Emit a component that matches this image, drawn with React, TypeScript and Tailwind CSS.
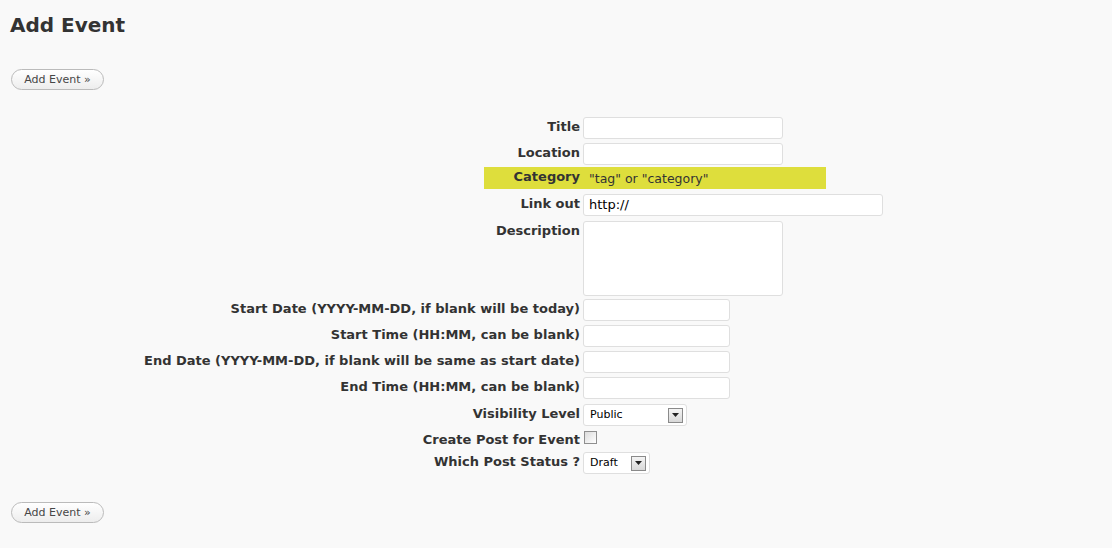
import React from "react";

const font = { fontFamily: '"DejaVu Sans", Verdana, sans-serif' };

function Btn() {
  return (
    <button className="h-[21px] w-[93px] rounded-full border border-[#bbbbbb] bg-gradient-to-b from-white to-[#ededed] text-[11px] text-[#464646] leading-none">
      Add Event »
    </button>
  );
}

function Input({ w, h = 22 }: { w: number; h?: number }) {
  return (
    <div
      className="rounded-[3px] border border-[#dfdfdf] bg-white"
      style={{ width: w, height: h }}
    />
  );
}

function Select({ w, value }: { w: number; value: string }) {
  return (
    <div
      className="flex h-[22px] items-center justify-between rounded-[3px] border border-[#dfdfdf] bg-white pl-[6px] pr-[3px] text-[11px] text-black"
      style={{ width: w }}
    >
      <span>{value}</span>
      <span className="flex h-[15px] w-[15px] items-center justify-center border border-[#8a8a8a] bg-gradient-to-b from-[#f4f4f4] to-[#d8d8d8]">
        <svg width="7" height="4" viewBox="0 0 7 4">
          <path d="M0 0h7L3.5 4z" fill="#222" />
        </svg>
      </span>
    </div>
  );
}

function Row({
  label,
  children,
  h = 26,
}: {
  label: string;
  children: React.ReactNode;
  h?: number;
}) {
  return (
    <div className="flex" style={{ height: h }}>
      <div className="w-[573px] pr-[3px] text-right text-[13px] font-bold text-[#333]">
        {label}
      </div>
      <div>{children}</div>
    </div>
  );
}

export default function App() {
  return (
    <div className="min-h-[548px] bg-[#f9f9f9] px-[10px] text-[#333]" style={font}>
      <h2 className="pt-[13px] text-[20px] font-bold leading-[24px] text-[#333]">Add Event</h2>
      <div className="mt-[29px] pl-[1px]">
        <Btn />
      </div>
      <div className="mt-[27px]">
        <Row label="Title">
          <Input w={200} />
        </Row>
        <Row label="Location" h={24}>
          <Input w={200} />
        </Row>
        <div className="flex h-[27px]">
          <div className="flex w-[573px] justify-end">
            <div className="h-[22px] w-[99px] bg-[#dede3c] pr-[3px] text-right text-[13px] font-bold text-[#333]">
              Category
            </div>
          </div>
          <div className="h-[22px] w-[243px] bg-[#dede3c] pl-[6px] pt-[3px] text-[12.5px] text-[#333]">
            "tag" or "category"
          </div>
        </div>
        <Row label="Link out" h={27}>
          <div className="flex h-[22px] w-[300px] items-center rounded-[3px] border border-[#dfdfdf] bg-white pl-[5px] text-[13px] text-black">
            http://
          </div>
        </Row>
        <Row label="Description" h={78}>
          <Input w={200} h={75} />
        </Row>
        <Row label="Start Date (YYYY-MM-DD, if blank will be today)">
          <Input w={147} />
        </Row>
        <Row label="Start Time (HH:MM, can be blank)">
          <Input w={147} />
        </Row>
        <Row label="End Date (YYYY-MM-DD, if blank will be same as start date)">
          <Input w={147} />
        </Row>
        <Row label="End Time (HH:MM, can be blank)" h={27}>
          <Input w={147} />
        </Row>
        <Row label="Visibility Level">
          <Select w={104} value="Public" />
        </Row>
        <Row label="Create Post for Event" h={22}>
          <div className="mt-[1px] ml-[1px] h-[13px] w-[13px] border border-[#8f8f8f] bg-gradient-to-br from-[#dcdcdc] to-white" />
        </Row>
        <Row label="Which Post Status ?">
          <Select w={67} value="Draft" />
        </Row>
      </div>
      <div className="mt-[21px] pl-[1px]">
        <Btn />
      </div>
    </div>
  );
}
